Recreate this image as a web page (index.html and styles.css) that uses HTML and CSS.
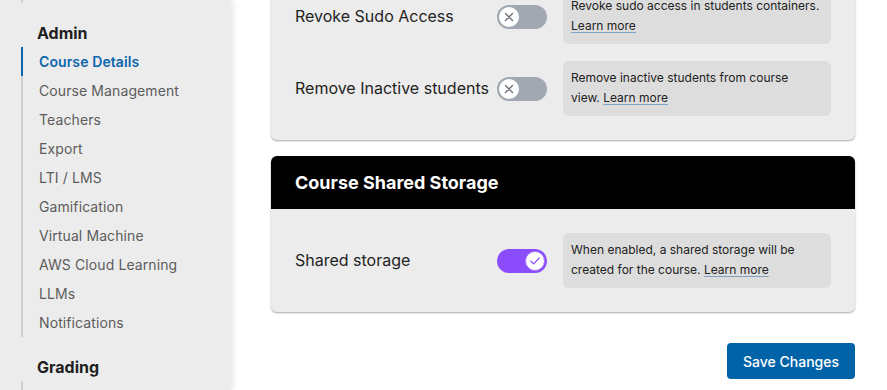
FILE: index.html
```html
<!DOCTYPE html>
<html lang="en">
<head>
    <meta charset="UTF-8">
    <meta name="viewport" content="width=device-width, initial-scale=1.0">
    <title>Course Settings</title>
    <link rel="stylesheet" href="styles.css">
</head>
<body>

<aside class="sidebar">
    <div class="sidebar-inner">
        <ul class="nav-list nav-tail"></ul>

        <h2 class="nav-heading">Admin</h2>
        <ul class="nav-list">
            <li class="nav-item active">Course Details</li>
            <li class="nav-item">Course Management</li>
            <li class="nav-item">Teachers</li>
            <li class="nav-item">Export</li>
            <li class="nav-item">LTI / LMS</li>
            <li class="nav-item">Gamification</li>
            <li class="nav-item">Virtual Machine</li>
            <li class="nav-item">AWS Cloud Learning</li>
            <li class="nav-item">LLMs</li>
            <li class="nav-item">Notifications</li>
        </ul>

        <h2 class="nav-heading">Grading</h2>
        <ul class="nav-list">
            <li class="nav-item">Grade book</li>
        </ul>
    </div>
</aside>

<main class="content">
    <section class="card">
        <div class="card-body">
            <div class="setting-row">
                <span class="setting-label">Revoke Sudo Access</span>
                <span class="toggle">
                    <span class="toggle-knob">
                        <svg width="10" height="10" viewBox="0 0 10 10"><path d="M1.5 1.5 L8.5 8.5 M8.5 1.5 L1.5 8.5" stroke="#6b7079" stroke-width="1.4" stroke-linecap="round"/></svg>
                    </span>
                </span>
                <p class="setting-desc">Revoke sudo access in students containers. <a href="#">Learn more</a></p>
            </div>
            <div class="setting-row">
                <span class="setting-label">Remove Inactive students</span>
                <span class="toggle">
                    <span class="toggle-knob">
                        <svg width="10" height="10" viewBox="0 0 10 10"><path d="M1.5 1.5 L8.5 8.5 M8.5 1.5 L1.5 8.5" stroke="#6b7079" stroke-width="1.4" stroke-linecap="round"/></svg>
                    </span>
                </span>
                <p class="setting-desc">Remove inactive students from course view. <a href="#">Learn more</a></p>
            </div>
        </div>
    </section>

    <section class="card">
        <h3 class="card-header">Course Shared Storage</h3>
        <div class="card-body">
            <div class="setting-row">
                <span class="setting-label">Shared storage</span>
                <span class="toggle on">
                    <span class="toggle-knob">
                        <svg width="12" height="10" viewBox="0 0 12 10"><path d="M1.8 5.2 L4.7 7.8 L10.2 2" fill="none" stroke="#8b4cfb" stroke-width="1.2" stroke-linecap="round" stroke-linejoin="round"/></svg>
                    </span>
                </span>
                <p class="setting-desc">When enabled, a shared storage will be created for the course. <a href="#">Learn more</a></p>
            </div>
        </div>
    </section>

    <div class="actions">
        <button type="button" class="save-button">Save Changes</button>
    </div>
</main>

</body>
</html>
```

FILE: styles.css
```css
* {
    margin: 0;
    padding: 0;
    box-sizing: border-box;
}
body {
    font-family: Inter, 'Noto Sans', sans-serif;
    background-color: #ffffff;
    display: flex;
    height: 100vh;
    overflow: hidden;
    color: #222;
}
.sidebar {
    width: 231px;
    flex-shrink: 0;
    background-color: #ececec;
    box-shadow: 2px 0 6px rgba(0, 0, 0, 0.1);
    position: relative;
    z-index: 1;
}
.sidebar-inner {
    padding-left: 21px;
}
.nav-list {
    list-style: none;
    border-left: 2px solid #cfcfcf;
}
.nav-tail {
    height: 3px;
}
.nav-heading {
    font-size: 16px;
    font-weight: 700;
    line-height: 20px;
    color: #1e1e1e;
    padding-left: 16px;
    margin-top: 18px;
    margin-bottom: 4px;
}
.nav-list + .nav-heading {
    margin-top: 20px;
}
.nav-item {
    font-size: 14px;
    line-height: 29px;
    color: #5c5c5c;
    padding-left: 16px;
    letter-spacing: 0.1px;
}
.nav-item.active {
    color: #0b66ae;
    font-weight: 600;
    border-left: 2px solid #0b66ae;
    margin-left: -2px;
}
.content {
    flex: 1;
    padding: 0 32px 0 40px;
    margin-top: -35px;
    display: flex;
    flex-direction: column;
    gap: 16px;
}
.card {
    background-color: #ececec;
    border-radius: 6px;
    box-shadow: 0 1px 2px rgba(0, 0, 0, 0.35);
    overflow: hidden;
}
.card-header {
    background-color: #000;
    color: #fff;
    font-size: 18px;
    font-weight: 700;
    height: 53px;
    line-height: 53px;
    padding: 0 24px;
}
.card-body {
    padding: 24px;
    display: flex;
    flex-direction: column;
    gap: 17px;
}
.setting-row {
    display: flex;
    align-items: center;
}
.setting-label {
    width: 202px;
    font-size: 16px;
    color: #232323;
    white-space: nowrap;
    padding-bottom: 2px;
}
.toggle {
    width: 50px;
    height: 24px;
    border-radius: 12px;
    background-color: #a2a8b1;
    padding: 2px;
    display: flex;
    flex-shrink: 0;
}
.toggle-knob {
    width: 20px;
    height: 20px;
    border-radius: 50%;
    background-color: #fff;
    display: flex;
    align-items: center;
    justify-content: center;
}
.toggle.on {
    background-color: #8b4cfb;
    justify-content: flex-end;
}
.toggle.on .toggle-knob {
    border: 1.5px solid #a97bfd;
}
.setting-desc {
    margin-left: 16px;
    flex: 1;
    background-color: #dddddd;
    border-radius: 6px;
    padding: 7px 11.5px 9px 8px;
    font-size: 12px;
    line-height: 19.5px;
    color: #222;
}
.setting-desc a {
    color: #222;
    text-decoration: underline;
    text-decoration-color: #7fa2c2;
    text-underline-offset: 2px;
}
.actions {
    display: flex;
    justify-content: flex-end;
    margin-top: 15px;
}
.save-button {
    width: 128px;
    height: 36px;
    background-color: #0063a8;
    color: #fff;
    border: none;
    border-radius: 4px;
    font-family: inherit;
    font-size: 14px;
    font-weight: 500;
    cursor: pointer;
}
```
